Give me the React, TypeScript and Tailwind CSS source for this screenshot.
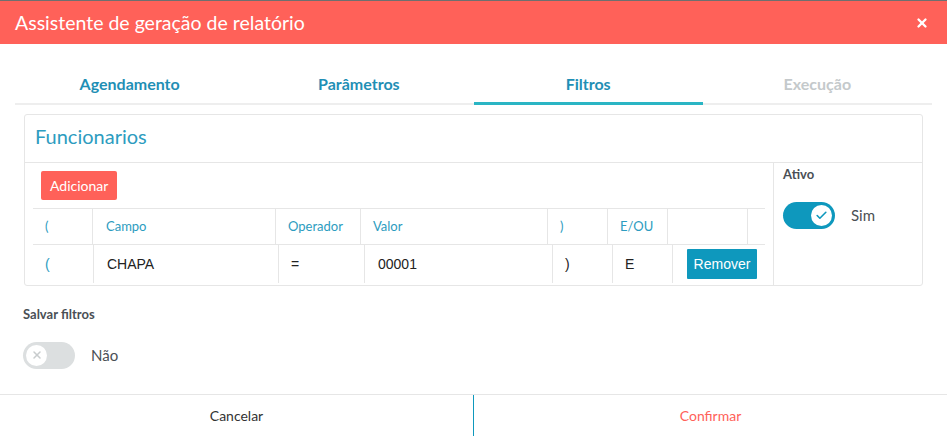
import { Check, X } from "lucide-react";

const tabs = [
  { label: "Agendamento", state: "done" },
  { label: "Parâmetros", state: "done" },
  { label: "Filtros", state: "active" },
  { label: "Execução", state: "disabled" },
];

function Toggle({ on }: { on: boolean }) {
  return (
    <div
      className={`flex h-[27px] w-[52px] items-center rounded-full px-[3px] ${
        on ? "justify-end bg-[#0e98bd]" : "justify-start bg-[#dcdfe0]"
      }`}
    >
      <div className="flex h-[21px] w-[21px] items-center justify-center rounded-full bg-white">
        {on ? (
          <Check className="h-[13px] w-[13px] text-[#0e98bd]" strokeWidth={3} />
        ) : (
          <X className="h-[12px] w-[12px] text-[#c8cccd]" strokeWidth={3} />
        )}
      </div>
    </div>
  );
}

export default function App() {
  return (
    <div className="flex h-[436px] w-[947px] flex-col bg-white font-['Lato',sans-serif]">
      {/* Header */}
      <div className="h-px bg-[#6f6f6f]" />
      <div className="flex h-[43px] items-center justify-between bg-[#ff6159] pl-[15px] pr-[18px]">
        <h1 className="text-[19.5px] text-white">Assistente de geração de relatório</h1>
        <X className="h-[14px] w-[14px] text-white" strokeWidth={4} />
      </div>

      {/* Tabs */}
      <div className="mx-[15px] mt-[25px] flex border-b-2 border-[#eeeeee]">
        {tabs.map((t) => (
          <div
            key={t.label}
            className={`-mb-[2px] flex h-[36px] flex-1 items-start justify-center border-b-[3px] pt-[3px] text-[16px] font-bold ${
              t.state === "active" ? "border-[#2ab5c4]" : "border-transparent"
            } ${t.state === "disabled" ? "text-[#c4c9cb]" : "text-[#1f8fb5]"}`}
          >
            {t.label}
          </div>
        ))}
      </div>

      {/* Card */}
      <div className="mx-[24px] mt-[9px] flex h-[172px] flex-col rounded-[3px] border border-[#e6e6e6]">
        <div className="flex h-[48px] items-start border-b border-[#e6e6e6] px-[10px] pt-[6px]">
          <span className="text-[20px] text-[#2d9cc0]">Funcionarios</span>
        </div>
        <div className="flex flex-1">
          <div className="flex w-[749px] flex-col border-r border-[#e6e6e6] pl-[8px] pr-[8px]">
            <div className="pb-[8px] pl-[8px] pt-[8px]">
              <button className="h-[29px] rounded-[2px] bg-[#ff6159] px-[9px] text-[14px] text-white">
                Adicionar
              </button>
            </div>
            <div className="flex h-[37px] border-y border-[#e6e6e6] text-[13px] text-[#2d9cc0]">
              <div className="flex w-[60px] items-center border-r border-[#e6e6e6] pl-[12px]">(</div>
              <div className="flex w-[183px] items-center border-r border-[#e6e6e6] pl-[13px]">Campo</div>
              <div className="flex w-[85px] items-center border-r border-[#e6e6e6] pl-[12px]">Operador</div>
              <div className="flex w-[187px] items-center border-r border-[#e6e6e6] pl-[12px]">Valor</div>
              <div className="flex w-[60px] items-center border-r border-[#e6e6e6] pl-[12px]">)</div>
              <div className="flex w-[60px] items-center border-r border-[#e6e6e6] pl-[12px]">E/OU</div>
              <div className="flex w-[80px] items-center border-r border-[#e6e6e6]" />
            </div>
            <div className="flex h-[38px] font-['Liberation_Sans',sans-serif] text-[14px] text-[#222]">
              <div className="flex w-[61px] items-center border-r border-[#e6e6e6] pl-[12px] text-[#2d9cc0]">(</div>
              <div className="flex w-[185px] items-center border-r border-[#e6e6e6] pl-[13px]">CHAPA</div>
              <div className="flex w-[86px] items-center border-r border-[#e6e6e6] pl-[12px]">=</div>
              <div className="flex w-[188px] items-center border-r border-[#e6e6e6] pl-[13px]">00001</div>
              <div className="flex w-[60px] items-center border-r border-[#e6e6e6] pl-[12px]">)</div>
              <div className="flex w-[60px] items-center border-r border-[#e6e6e6] pl-[12px]">E</div>
              <div className="flex flex-1 items-center pl-[14px]">
                <button className="h-[30px] w-[70px] rounded-[1px] bg-[#0e98bd] text-[14px] text-white">
                  Remover
                </button>
              </div>
            </div>
          </div>
          <div className="flex flex-col pl-[9px] pt-[2px]">
            <span className="text-[13px] font-bold text-[#4a4f55]">Ativo</span>
            <div className="mt-[17px] flex items-center gap-[16px]">
              <Toggle on />
              <span className="text-[15px] text-[#4a4f55]">Sim</span>
            </div>
          </div>
        </div>
      </div>

      {/* Salvar filtros */}
      <div className="ml-[23px] mt-[19px] flex flex-col">
        <span className="text-[13px] font-bold text-[#4a4f55]">Salvar filtros</span>
        <div className="mt-[17px] flex items-center gap-[16px]">
          <Toggle on={false} />
          <span className="text-[15px] text-[#4a4f55]">Não</span>
        </div>
      </div>

      {/* Footer */}
      <div className="mt-auto flex h-[42px] border-t border-[#e6e6e6] text-[14px]">
        <button className="flex flex-1 items-center justify-center border-r border-[#0e98bd] text-[#333]">
          Cancelar
        </button>
        <button className="flex flex-1 items-center justify-center text-[#ff6159]">Confirmar</button>
      </div>
    </div>
  );
}
